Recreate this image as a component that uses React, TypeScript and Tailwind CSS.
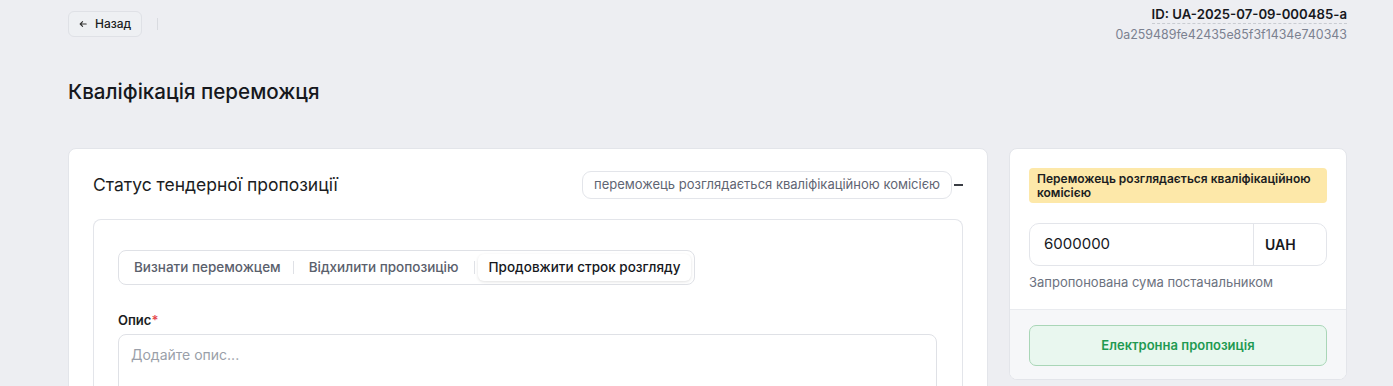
import React from "react";

export default function App() {
  return (
    <div
      className="min-h-[386px] w-full bg-[#edeef2] text-[#1b1d22]"
      style={{ fontFamily: "Inter, 'Noto Sans', sans-serif" }}
    >
      <div className="pl-[68px] pr-[46px]">
        {/* Top bar */}
        <div className="flex items-start justify-between pt-[11px]">
          <div className="flex items-center">
            <button className="flex h-[26px] items-center gap-[8px] rounded-[6px] border border-[#dfe1e6] bg-[#eef0f3] pl-[10px] pr-[10px] text-[12px] font-medium text-[#1b1d22]">
              <svg width="8" height="8" viewBox="0 0 10 10" fill="none">
                <path d="M9 5H1.5M4.5 2L1.5 5L4.5 8" stroke="#333" strokeWidth="1.4" strokeLinecap="round" strokeLinejoin="round" />
              </svg>
              Назад
            </button>
            <div className="ml-[15px] h-[12px] w-px bg-[#d9dbe0]" />
          </div>
          <div className="mt-[-5px] flex flex-col items-end">
            <div className="border-b border-dashed border-[#c9ccd2] pb-[1px] text-[13.2px] font-semibold leading-[16px] text-[#16181d]">
              ID: UA-2025-07-09-000485-a
            </div>
            <div className="mt-[3px] text-[12.4px] leading-[15px] text-[#7b8190]">
              0a259489fe42435e85f3f1434e740343
            </div>
          </div>
        </div>

        <h1 className="mt-[36px] text-[20.6px] font-medium leading-[28px] text-[#16181d]">
          Кваліфікація переможця
        </h1>

        <div className="mt-[42px] flex items-start gap-[21px]">
          {/* Left card */}
          <div className="flex-1 rounded-[8px] border border-[#e3e5ea] bg-white pl-[24px] pr-[24px] pt-[22px]">
            <div className="flex items-center justify-between">
              <div className="text-[17.5px] font-normal leading-[24px] text-[#1b1d22]">
                Статус тендерної пропозиції
              </div>
              <div className="flex items-center">
                <div className="flex h-[28px] items-center rounded-[9px] border border-[#e3e5ea] px-[11px] text-[13px] text-[#5f6573]">
                  переможець розглядається кваліфікаційною комісією
                </div>
                <div className="ml-[2px] h-[1.5px] w-[9px] bg-[#3a3d44]" />
              </div>
            </div>

            <div className="mt-[20px] h-[200px] rounded-t-[8px] border border-b-0 border-[#e3e5ea] pl-[24px] pr-[25px] pt-[30px]">
              <div className="inline-flex h-[35px] items-center rounded-[8px] border border-[#dfe1e6] px-[3px] text-[13.5px] font-medium">
                <div className="px-[12px] text-[#5a606c]">Визнати переможцем</div>
                <div className="h-[13px] w-px bg-[#dfe1e6]" />
                <div className="px-[15px] text-[#5a606c]">Відхилити пропозицію</div>
                <div className="h-[13px] w-px bg-[#dfe1e6]" />
                <div className="ml-[3px] flex h-[27px] items-center rounded-[6px] bg-white px-[11px] text-[#16181d] shadow-[0_1px_3px_rgba(0,0,0,0.12)]">
                  Продовжити строк розгляду
                </div>
              </div>

              <div className="mt-[27px] text-[13px] font-semibold leading-[16px] text-[#1b1d22]">
                Опис<span className="text-[#e5484d]">*</span>
              </div>
              <div className="mt-[6px] h-[80px] rounded-[8px] border border-[#dfe1e6] px-[12px] pt-[9px] text-[14px] text-[#9a9fa9]">
                Додайте опис...
              </div>
            </div>
          </div>

          {/* Right card */}
          <div className="w-[338px] overflow-hidden rounded-[8px] border border-[#e3e5ea] bg-white">
            <div className="px-[19px] pt-[19px] pb-[19px]">
              <div className="rounded-[4px] bg-[#fde8a9] px-[8px] py-[3.5px] text-[12px] font-semibold leading-[14px] text-[#1b1d22]">
                Переможець розглядається кваліфікаційною комісією
              </div>
              <div className="mt-[20px] flex h-[43px] items-stretch rounded-[10px] border border-[#e3e5ea]">
                <div className="flex flex-1 items-center pl-[14px] text-[15px] text-[#16181d]">6000000</div>
                <div className="w-px bg-[#e3e5ea]" />
                <div className="flex w-[72px] items-center pl-[11px] text-[14px] font-semibold text-[#16181d]">UAH</div>
              </div>
              <div className="mt-[8px] text-[13px] leading-[16px] text-[#6c7280]">
                Запропонована сума постачальником
              </div>
            </div>
            <div className="border-t border-[#e9ebef] bg-[#f6f7f9] px-[19px] pt-[15px] pb-[13px]">
              <button className="flex h-[41px] w-full items-center justify-center rounded-[7px] border border-[#a9d6b7] bg-[#e9f7ef] text-[13px] font-semibold text-[#1f9a52]">
                Електронна пропозиція
              </button>
            </div>
          </div>
        </div>
      </div>
    </div>
  );
}
